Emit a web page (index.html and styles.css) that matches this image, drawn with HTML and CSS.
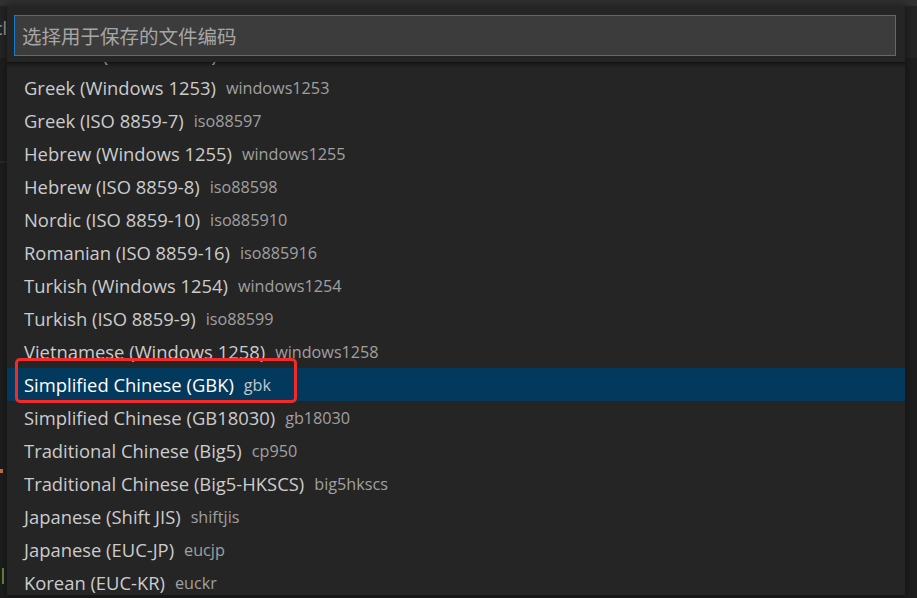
FILE: index.html
```html
<!DOCTYPE html>
<html lang="zh-CN">
<head>
<meta charset="utf-8">
<title>Quick Pick</title>
<link rel="stylesheet" href="styles.css">
</head>
<body>
<div class="editor">
  <div class="titlebar"></div>
  <div class="tabbar"><span class="tabchar">cl</span></div>
  <div class="code">
    <div class="gline"></div>
  </div>
  <span class="mark mark-orange"></span>
  <span class="mark mark-green"></span>
</div>

<div class="quickpick">
  <div class="inputbox">
    <input class="input" type="text" placeholder="选择用于保存的文件编码">
  </div>
  <div class="list">
    <div class="rows">
      <div class="row"><span class="label">Estonian (ISO 8859-13)</span><span class="desc">iso885913</span></div>
      <div class="row"><span class="label">Greek (Windows 1253)</span><span class="desc">windows1253</span></div>
      <div class="row"><span class="label">Greek (ISO 8859-7)</span><span class="desc">iso88597</span></div>
      <div class="row"><span class="label">Hebrew (Windows 1255)</span><span class="desc">windows1255</span></div>
      <div class="row"><span class="label">Hebrew (ISO 8859-8)</span><span class="desc">iso88598</span></div>
      <div class="row"><span class="label">Nordic (ISO 8859-10)</span><span class="desc">iso885910</span></div>
      <div class="row"><span class="label">Romanian (ISO 8859-16)</span><span class="desc">iso885916</span></div>
      <div class="row"><span class="label">Turkish (Windows 1254)</span><span class="desc">windows1254</span></div>
      <div class="row"><span class="label">Turkish (ISO 8859-9)</span><span class="desc">iso88599</span></div>
      <div class="row"><span class="label">Vietnamese (Windows 1258)</span><span class="desc">windows1258</span></div>
      <div class="row selected"><span class="label">Simplified Chinese (GBK)</span><span class="desc">gbk</span><span class="redbox"></span></div>
      <div class="row"><span class="label">Simplified Chinese (GB18030)</span><span class="desc">gb18030</span></div>
      <div class="row"><span class="label">Traditional Chinese (Big5)</span><span class="desc">cp950</span></div>
      <div class="row"><span class="label">Traditional Chinese (Big5-HKSCS)</span><span class="desc">big5hkscs</span></div>
      <div class="row"><span class="label">Japanese (Shift JIS)</span><span class="desc">shiftjis</span></div>
      <div class="row"><span class="label">Japanese (EUC-JP)</span><span class="desc">eucjp</span></div>
      <div class="row"><span class="label">Korean (EUC-KR)</span><span class="desc">euckr</span></div>
      <div class="row"><span class="label">Thai (Windows 874)</span><span class="desc">windows874</span></div>
    </div>
    <div class="shadow"></div>
  </div>
</div>
</body>
</html>
```

FILE: styles.css
```css
* { box-sizing: border-box; }
html, body {
  margin: 0;
  padding: 0;
  width: 917px;
  height: 598px;
  overflow: hidden;
  background: #1e1e1e;
  font-family: "Open Sans", "Noto Sans", "Noto Sans CJK SC", sans-serif;
}
.editor {
  position: relative;
  width: 917px;
  height: 598px;
  display: flex;
  flex-direction: column;
}
.titlebar {
  height: 6px;
  background: #323233;
}
.tabbar {
  height: 52px;
  background: #252526;
  display: flex;
  align-items: center;
}
.tabchar {
  margin-left: -6px;
  color: #a0a0a0;
  font-size: 18px;
  margin-top: -8px;
}
.code {
  flex: 1;
  background: #1e1e1e;
}
.gline {
  margin-top: 103px;
  height: 2px;
  width: 7px;
  background: #2a2a2a;
}
.mark {
  position: absolute;
  left: 0;
  width: 3px;
}
.mark-orange {
  top: 469px;
  height: 4px;
  background: #c8743a;
}
.mark-green {
  top: 568px;
  height: 16px;
  left: 2px;
  width: 2px;
  background: #6a8a3a;
}

.quickpick {
  position: absolute;
  left: 7px;
  top: 6px;
  width: 898px;
  height: 589px;
  background: #252526;
  padding: 9px 9px 0 7px;
  display: flex;
  flex-direction: column;
  box-shadow: 0 0 8px 2px rgba(0,0,0,0.35);
}
.inputbox {
  height: 41px;
  border: 1px solid #0e7fd2;
  background: #3c3c3c;
  display: flex;
  align-items: center;
}
.input {
  width: 100%;
  height: 100%;
  border: 0;
  outline: 0;
  background: transparent;
  padding: 0 0 0 7px;
  font-family: "Noto Sans CJK SC", "Noto Sans", sans-serif;
  font-size: 19.5px;
  color: #cccccc;
}
.input::placeholder {
  color: #a6a6a6;
}
.list {
  position: relative;
  flex: 1;
  margin: 6px -9px 0 -7px;
  overflow: hidden;
}
.shadow {
  position: absolute;
  left: 0;
  right: 0;
  top: 0;
  height: 6px;
  box-shadow: inset 0 6px 6px -6px #000;
}
.rows {
  margin-top: -24px;
  display: flex;
  flex-direction: column;
}
.row {
  position: relative;
  height: 33px;
  display: flex;
  align-items: center;
  padding-left: 17px;
  white-space: nowrap;
}
.label {
  color: #cccccc;
  font-size: 18.4px;
}
.desc {
  color: #a0a0a0;
  font-size: 16.2px;
  margin-left: 10px;
}
.row.selected {
  background: #04395e;
}
.row.selected .label { color: #ffffff; }
.row.selected .desc { color: #c0c8d0; }
.redbox {
  position: absolute;
  left: 8px;
  top: -10px;
  width: 282px;
  height: 45px;
  border: 3px solid #f22a2a;
  border-radius: 5px;
}
```
